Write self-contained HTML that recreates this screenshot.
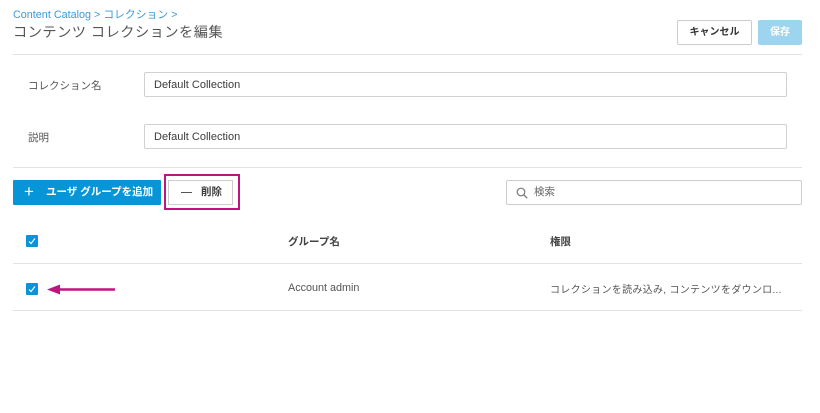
<!DOCTYPE html>
<html><head><meta charset="utf-8"><style>
body{margin:0;width:820px;height:413px;background:#fff;font-family:"Liberation Sans","Noto Sans CJK JP",sans-serif;color:#3c3c3c;position:relative;overflow:hidden}
.a{position:absolute}
.hr{position:absolute;left:13px;width:789px;height:1px;background:#e2e2e2}
.inp{position:absolute;left:144px;width:643px;height:25px;border:1px solid #d0d0d0;border-radius:2px;font-size:11px;line-height:25px;padding-left:9px;box-sizing:border-box;color:#3c3c3c}
.cb{position:absolute;left:26px;width:12px;height:12px;background:#0696d7;border-radius:1px}
.cb svg{position:absolute;left:2px;top:2px}
</style></head><body>
<div class="a" style="left:13px;top:6px;font-size:10.8px;color:#3a9ad9">Content Catalog &gt; コレクション &gt;</div>
<div class="a" style="left:13px;top:22px;font-size:14.2px;color:#555;letter-spacing:0.5px">コンテンツ コレクションを編集</div>
<div class="a" style="left:677px;top:20px;width:75px;height:25px;border:1px solid #ccc;box-sizing:border-box;border-radius:2px;font-size:10px;font-weight:bold;text-align:center;line-height:23px;color:#333">キャンセル</div>
<div class="a" style="left:758px;top:20px;width:44px;height:25px;background:#9dd5ef;border-radius:2px;font-size:10px;font-weight:bold;text-align:center;line-height:25px;color:#fff">保存</div>
<div class="hr" style="top:54px"></div>
<div class="a" style="left:28px;top:78px;font-size:10.5px;color:#555">コレクション名</div>
<div class="inp" style="top:72px">Default Collection</div>
<div class="a" style="left:28px;top:130px;font-size:10.5px;color:#555">説明</div>
<div class="inp" style="top:124px">Default Collection</div>
<div class="hr" style="top:167px"></div>
<div class="a" style="left:13px;top:180px;width:148px;height:25px;background:#0696d7;border-radius:1px;color:#fff;font-size:10.5px;font-weight:bold;line-height:25px"><span style="position:absolute;left:11px;top:-1px;font-size:17px;font-weight:normal">+</span><span style="position:absolute;left:33px">ユーザ グループを追加</span></div>
<div class="a" style="left:164px;top:174px;width:76px;height:36px;border:2px solid #c0157f;box-sizing:border-box"></div>
<div class="a" style="left:168px;top:180px;width:65px;height:25px;border:1px solid #ccc;box-sizing:border-box;font-size:10.5px;font-weight:bold;line-height:23px"><span style="position:absolute;left:12px;top:11px;width:11px;height:1px;background:#555"></span><span style="position:absolute;left:32px">削除</span></div>
<div class="a" style="left:506px;top:180px;width:296px;height:25px;border:1px solid #ccc;box-sizing:border-box;border-radius:2px;font-size:10.5px;line-height:23px;color:#666"><svg class="a" style="left:9px;top:6px" width="12" height="12" viewBox="0 0 12 12"><circle cx="5" cy="5" r="3.8" fill="none" stroke="#777" stroke-width="1.2"/><path d="M8 8l3.2 3.2" stroke="#777" stroke-width="1.3"/></svg><span style="position:absolute;left:27px">検索</span></div>
<div class="cb" style="top:235px"><svg width="8" height="8" viewBox="0 0 8 8"><path d="M1 4.5l2 2L7 1.5" fill="none" stroke="#fff" stroke-width="1.1"/></svg></div>
<div class="a" style="left:288px;top:234px;font-size:10.5px;font-weight:bold;color:#444">グループ名</div>
<div class="a" style="left:550px;top:234px;font-size:10.5px;font-weight:bold;color:#444">権限</div>
<div class="hr" style="top:263px"></div>
<div class="cb" style="top:283px"><svg width="8" height="8" viewBox="0 0 8 8"><path d="M1 4.5l2 2L7 1.5" fill="none" stroke="#fff" stroke-width="1.1"/></svg></div>
<svg class="a" style="left:45px;top:283px" width="72" height="13" viewBox="0 0 72 13"><path d="M14 6.5H70" stroke="#c0157f" stroke-width="2.6"/><path d="M2 6.5L15 1.5V11.5Z" fill="#c0157f"/></svg>
<div class="a" style="left:288px;top:282px;font-size:10.8px;color:#555">Account admin</div>
<div class="a" style="left:550px;top:281px;font-size:10px;color:#555;letter-spacing:0.3px">コレクションを読み込み, コンテンツをダウンロ...</div>
<div class="hr" style="top:310px"></div>
</body></html>
